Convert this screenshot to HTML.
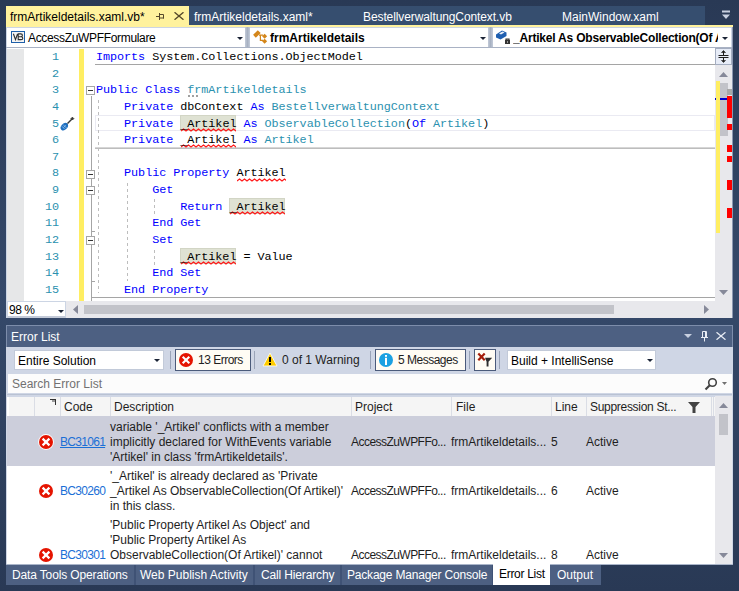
<!DOCTYPE html>
<html><head><meta charset="utf-8">
<style>
*{margin:0;padding:0;box-sizing:border-box}
html,body{width:739px;height:591px;overflow:hidden;background:linear-gradient(to bottom,#293955 0%,#35496a 50%,#293955 100%);font-family:"Liberation Sans",sans-serif;font-size:12px}
.a{position:absolute}
.t{position:absolute;white-space:pre;line-height:14px}
.code{position:absolute;left:96px;white-space:pre;font-family:"Liberation Mono",monospace;font-size:11.8px;letter-spacing:-0.06px;line-height:16.64px;height:16.64px;color:#000;margin-top:1px}
.k{color:#0000ff}
.ty{color:#2b91af}
.ln{position:absolute;left:23px;width:36px;text-align:right;font-family:"Liberation Mono",monospace;font-size:11.8px;letter-spacing:-0.06px;line-height:16.64px;color:#2b91af;margin-top:1px}
.hl{background:#dfe2d3;outline:1px solid #d2d5c5;outline-offset:-1px}
.us{position:relative;top:2px}
.dg{position:absolute;width:1px;background:repeating-linear-gradient(to bottom,#bdbdbd 0 3px,transparent 3px 6px)}
.sep{position:absolute;height:1px;background:#a5a5a5}
.box{position:absolute;left:86px;width:9px;height:9px;border:1px solid #a5a5a5;background:#fff}
.box:after{content:"";position:absolute;left:1px;top:3px;width:5px;height:1px;background:#333}
.tick{position:absolute;left:91px;width:4px;height:1px;background:#a5a5a5}
.sb{position:absolute;background:#e8e8ec}
.tab2{position:absolute;top:565px;height:20px;background:#4d6082;color:#fff}
.tab2 span{position:absolute;top:3px;white-space:pre}
.hdr span{position:absolute;top:4px;white-space:pre;color:#1e1e1e}
.cd{position:absolute;width:1px;background:#dadde5;top:397px;height:19px}
.row{position:absolute;left:7px;width:708px}
.desc{position:absolute;left:110px;white-space:pre;line-height:15px;color:#1e1e1e}
.ic{position:absolute;width:15px;height:15px}
.code2{position:absolute;left:60px;color:#1a6fd6}
</style></head><body>

<!-- document tabs -->
<div class="a" style="left:6px;top:6px;width:183px;height:19px;background:#fff29d"></div>
<div class="t" style="left:10px;top:10px;color:#000">frmArtikeldetails.xaml.vb*</div>
<svg class="a" style="left:155px;top:12px" width="10" height="9" viewBox="0 0 10 9"><path d="M1 4.5H4M4.5 1V8M4 2.5H8.5V6.5M4 6H9" fill="none" stroke="#55482a" stroke-width="1"/></svg>
<svg class="a" style="left:174px;top:12px" width="10" height="8" viewBox="0 0 10 8"><path d="M0.5 0.3L9.5 7.7M9.5 0.3L0.5 7.7" fill="none" stroke="#55482a" stroke-width="1.4"/></svg>
<div class="a" style="left:189px;top:6px;width:516px;height:19px;background:#364e6f"></div>
<div class="t" style="left:194px;top:10px;color:#fff">frmArtikeldetails.xaml*</div>
<div class="t" style="left:363px;top:10px;color:#fff;letter-spacing:-0.1px">BestellverwaltungContext.vb</div>
<div class="t" style="left:562px;top:10px;color:#fff">MainWindow.xaml</div>
<svg class="a" style="left:721px;top:10px" width="10" height="10" viewBox="0 0 10 10"><path d="M1 1.5H9" stroke="#c8d0e0" stroke-width="2"/><path d="M1 4.5H9L5 9Z" fill="#c8d0e0"/></svg>
<div class="a" style="left:6px;top:25px;width:727px;height:2px;background:#fff29d"></div>

<!-- nav bar -->
<div class="a" style="left:6px;top:27px;width:727px;height:21px;background:#ccd5e4"></div>
<div class="a" style="left:7px;top:28px;width:238px;height:19px;background:#fff"></div>
<div class="a" style="left:250px;top:28px;width:238px;height:19px;background:#fff"></div>
<div class="a" style="left:493px;top:28px;width:238px;height:19px;background:#fff"></div>
<div class="a" style="left:245px;top:27px;width:5px;height:21px;background:linear-gradient(to right,#c3cbd9,#a7b1c2 50%,#c3cbd9)"></div>
<div class="a" style="left:488px;top:27px;width:5px;height:21px;background:linear-gradient(to right,#c3cbd9,#a7b1c2 50%,#c3cbd9)"></div>
<div class="a" style="left:6px;top:47px;width:727px;height:2px;background:#a9b2c4"></div>
<!-- VB icon -->
<div class="a" style="left:11px;top:31px;width:14px;height:12px;border:1px solid #1f5fa8;background:#f4f4f4"></div>
<svg class="a" style="left:11px;top:31px" width="14" height="12" viewBox="0 0 14 12"><path d="M2.4 2.8L4.5 8.7L6.6 2.8M7 2.9H9.8Q11.4 2.9 11.4 4.3Q11.4 5.7 9.8 5.7H7.4M7.4 5.7H10Q11.8 5.7 11.8 7.2Q11.8 8.6 10 8.6H7.2V2.9" fill="none" stroke="#2e2e2e" stroke-width="1.1"/></svg>
<div class="t" style="left:28px;top:31px;color:#000;letter-spacing:-0.33px">AccessZuWPFFormulare</div>
<svg class="a" style="left:237px;top:37px" width="6" height="3"><path d="M0 0H6L3 3Z" fill="#1b2436"/></svg>
<!-- class icon -->
<svg class="a" style="left:252px;top:29px" width="16" height="16" viewBox="0 0 16 16"><path d="M1.1 5.8L5.8 1.2L8.7 3.9L3.8 8.8Z" fill="#d4861a"/><path d="M7 6.2H11M8.4 6V11.4H11" fill="none" stroke="#d4861a" stroke-width="1.2"/><path d="M10.1 7.2L12.6 4.7L15.1 7.2L12.6 9.7Z" fill="#d4861a"/><path d="M10.1 12.2L12.6 9.7L15.1 12.2L12.6 14.7Z" fill="#d4861a"/></svg>
<div class="t" style="left:270px;top:31px;color:#000;font-weight:bold">frmArtikeldetails</div>
<svg class="a" style="left:480px;top:37px" width="6" height="3"><path d="M0 0H6L3 3Z" fill="#1b2436"/></svg>
<!-- field icon -->
<svg class="a" style="left:495px;top:29px" width="16" height="16" viewBox="0 0 16 16"><path d="M1 5.5L7 1.5L11.5 3.5V7L5.5 10.5L1 8.5Z" fill="#1f5fb0"/><path d="M4 4.5L7.5 2.5L9.5 3.5L6 5.5Z" fill="#e8eef8"/><rect x="10" y="11" width="5" height="4" fill="#333"/><rect x="12" y="12.5" width="1" height="1" fill="#fff"/><path d="M11 11.2V10.2H14V11.2" fill="none" stroke="#333" stroke-width="1.2"/></svg>
<div class="t" style="left:513px;top:31px;width:205px;overflow:hidden;color:#000;font-weight:bold;letter-spacing:-0.2px">_Artikel As ObservableCollection(Of A</div>
<svg class="a" style="left:722px;top:37px" width="6" height="3"><path d="M0 0H6L3 3Z" fill="#1b2436"/></svg>

<!-- editor -->
<div class="a" style="left:6px;top:48px;width:709px;height:253px;background:#fff;overflow:hidden" id="ed">
</div>
<div class="a" style="left:6px;top:48px;width:1px;height:270px;background:#ccd5e4"></div>
<div class="a" style="left:7px;top:49px;width:17px;height:252px;background:#e6e7e8"></div>
<div class="a" style="left:79px;top:49px;width:5px;height:252px;background:#ffee62"></div>

<div class="ln" style="top:48px">1</div>
<div class="ln" style="top:64.64px">2</div>
<div class="ln" style="top:81.28px">3</div>
<div class="ln" style="top:97.92px">4</div>
<div class="ln" style="top:114.56px">5</div>
<div class="ln" style="top:131.2px">6</div>
<div class="ln" style="top:147.84px">7</div>
<div class="ln" style="top:164.48px">8</div>
<div class="ln" style="top:181.12px">9</div>
<div class="ln" style="top:197.76px">10</div>
<div class="ln" style="top:214.4px">11</div>
<div class="ln" style="top:231.04px">12</div>
<div class="ln" style="top:247.68px">13</div>
<div class="ln" style="top:264.32px">14</div>
<div class="ln" style="top:280.96px">15</div>

<!-- screwdriver -->
<svg class="a" style="left:60px;top:116px" width="15" height="15" viewBox="0 0 15 15"><path d="M7.5 7.5L12 3" stroke="#3a3a3a" stroke-width="1.4"/><path d="M11 2.6L12.4 1.2L13.8 2.6L12.4 4Z" fill="#3a3a3a" stroke="#3a3a3a" stroke-width="1"/><path d="M6 7.8L7.2 9" stroke="#3a3a3a" stroke-width="2.2"/><ellipse cx="4.3" cy="10.7" rx="4.2" ry="3" transform="rotate(-45 4.3 10.7)" fill="#1e6fc0"/><path d="M3 8.5L6.5 12M1.8 10.2L4.8 13.2M3.5 11.5L5.8 9.2" stroke="#a8cdf0" stroke-width="0.7"/></svg>

<!-- current line box -->
<div class="a" style="left:95px;top:115px;width:620px;height:16px;border:1px solid #eaeaf2"></div>

<!-- separators -->
<div class="sep" style="left:95px;top:64px;width:620px"></div>
<div class="sep" style="left:95px;top:147px;width:620px;height:2px;background:linear-gradient(#d6d6d6 50%,#bdbdbd 50%)"></div>
<div class="sep" style="left:95px;top:297px;width:620px"></div>

<!-- outlining -->
<div class="a" style="left:91px;top:96px;width:1px;height:205px;background:#a5a5a5"></div>
<div class="box" style="top:86px"></div>
<div class="box" style="top:170px"></div>
<div class="box" style="top:186px"></div>
<div class="box" style="top:236px"></div>
<div class="tick" style="top:231px"></div>
<div class="tick" style="top:281px"></div>
<div class="tick" style="top:297px"></div>

<!-- structure guides -->
<div class="dg" style="left:98px;top:100px;height:193px"></div>
<div class="dg" style="left:127px;top:183px;height:98px"></div>
<div class="dg" style="left:154px;top:199px;height:16px"></div>
<div class="dg" style="left:154px;top:250px;height:15px"></div>

<!-- highlights -->
<div class="a hl" style="left:180px;top:115px;width:56px;height:16px"></div>
<div class="a hl" style="left:229px;top:198px;width:56px;height:16px"></div>
<div class="a hl" style="left:180px;top:248px;width:56px;height:16px"></div>

<!-- squiggles -->
<svg class="a" style="left:181px;top:128px" width="55" height="4" viewBox="0 0 55 4"><path d="M0 3 L2.5 1 L5 3 L7.5 1 L10 3 L12.5 1 L15 3 L17.5 1 L20 3 L22.5 1 L25 3 L27.5 1 L30 3 L32.5 1 L35 3 L37.5 1 L40 3 L42.5 1 L45 3 L47.5 1 L50 3 L52.5 1 L55 3 L57.5 1" fill="none" stroke="#ff1a1a" stroke-width="1.2"/></svg>
<svg class="a" style="left:181px;top:144px" width="55" height="4" viewBox="0 0 55 4"><path d="M0 3 L2.5 1 L5 3 L7.5 1 L10 3 L12.5 1 L15 3 L17.5 1 L20 3 L22.5 1 L25 3 L27.5 1 L30 3 L32.5 1 L35 3 L37.5 1 L40 3 L42.5 1 L45 3 L47.5 1 L50 3 L52.5 1 L55 3 L57.5 1" fill="none" stroke="#ff1a1a" stroke-width="1.2"/></svg>
<svg class="a" style="left:237px;top:178px" width="49" height="4" viewBox="0 0 49 4"><path d="M0 3 L2.5 1 L5 3 L7.5 1 L10 3 L12.5 1 L15 3 L17.5 1 L20 3 L22.5 1 L25 3 L27.5 1 L30 3 L32.5 1 L35 3 L37.5 1 L40 3 L42.5 1 L45 3 L47.5 1 L50 3" fill="none" stroke="#ff1a1a" stroke-width="1.2"/></svg>
<svg class="a" style="left:230px;top:211px" width="55" height="4" viewBox="0 0 55 4"><path d="M0 3 L2.5 1 L5 3 L7.5 1 L10 3 L12.5 1 L15 3 L17.5 1 L20 3 L22.5 1 L25 3 L27.5 1 L30 3 L32.5 1 L35 3 L37.5 1 L40 3 L42.5 1 L45 3 L47.5 1 L50 3 L52.5 1 L55 3 L57.5 1" fill="none" stroke="#ff1a1a" stroke-width="1.2"/></svg>
<svg class="a" style="left:181px;top:261px" width="55" height="4" viewBox="0 0 55 4"><path d="M0 3 L2.5 1 L5 3 L7.5 1 L10 3 L12.5 1 L15 3 L17.5 1 L20 3 L22.5 1 L25 3 L27.5 1 L30 3 L32.5 1 L35 3 L37.5 1 L40 3 L42.5 1 L45 3 L47.5 1 L50 3 L52.5 1 L55 3 L57.5 1" fill="none" stroke="#ff1a1a" stroke-width="1.2"/></svg>
<!-- code -->
<div class="code" style="top:48px"><span class="k">Imports</span> System.Collections.ObjectModel</div>
<div class="code" style="top:81.28px"><span class="k">Public</span> <span class="k">Class</span> <span class="ty">frmArtikeldetails</span></div>
<div class="code" style="top:97.92px">    <span class="k">Private</span> dbContext <span class="k">As</span> <span class="ty">BestellverwaltungContext</span></div>
<div class="code" style="top:114.56px">    <span class="k">Private</span> <span class="us">_</span>Artikel <span class="k">As</span> <span class="ty">ObservableCollection</span>(<span class="k">Of</span> <span class="ty">Artikel</span>)</div>
<div class="code" style="top:131.2px">    <span class="k">Private</span> <span class="us">_</span>Artikel <span class="k">As</span> <span class="ty">Artikel</span></div>
<div class="code" style="top:164.48px">    <span class="k">Public</span> <span class="k">Property</span> Artikel</div>
<div class="code" style="top:181.12px">        <span class="k">Get</span></div>
<div class="code" style="top:197.76px">            <span class="k">Return</span> <span class="us">_</span>Artikel</div>
<div class="code" style="top:214.4px">        <span class="k">End</span> <span class="k">Get</span></div>
<div class="code" style="top:231.04px">        <span class="k">Set</span></div>
<div class="code" style="top:247.68px">            <span class="us">_</span>Artikel = Value</div>
<div class="code" style="top:264.32px">        <span class="k">End</span> <span class="k">Set</span></div>
<div class="code" style="top:280.96px">    <span class="k">End</span> <span class="k">Property</span></div>

<!-- dots -->
<div class="a" style="left:188px;top:95px;width:2px;height:2px;background:#a0a0a0"></div>
<div class="a" style="left:192px;top:95px;width:2px;height:2px;background:#a0a0a0"></div>
<div class="a" style="left:196px;top:95px;width:2px;height:2px;background:#a0a0a0"></div>

<!-- vertical scrollbar -->
<div class="sb" style="left:715px;top:48px;width:17px;height:270px"></div>
<div class="a" style="left:715px;top:48px;width:17px;height:17px;background:#e7ecf7;border:1px solid #a4adc0"></div>
<svg class="a" style="left:716px;top:49px" width="15" height="15" viewBox="0 0 15 15"><path d="M2.5 6.5H12.5M2.5 8.5H12.5" stroke="#1e1e1e" stroke-width="1"/><path d="M7.5 2V6M7.5 9V13" stroke="#1e1e1e" stroke-width="1"/><path d="M5.5 3.5L7.5 1.5L9.5 3.5ZM5.5 11.5L7.5 13.5L9.5 11.5Z" fill="#1e1e1e" stroke="#1e1e1e" stroke-width="0.6"/></svg>
<svg class="a" style="left:719px;top:72px" width="9" height="5"><path d="M0 5H9L4.5 0Z" fill="#868999"/></svg>
<div class="a" style="left:720px;top:83px;width:8px;height:53px;background:#c2c3c9"></div>
<div class="a" style="left:715px;top:98px;width:17px;height:2px;background:#0000cc"></div>
<div class="a" style="left:716px;top:81px;width:4px;height:152px;background:#ffee62"></div>
<div class="a" style="left:727px;top:89px;width:5px;height:6px;background:#a8a8a8"></div>
<div class="a" style="left:727px;top:96px;width:5px;height:22px;background:#ff0000"></div>
<div class="a" style="left:727px;top:124px;width:5px;height:6px;background:#ff0000"></div>
<div class="a" style="left:727px;top:145px;width:5px;height:7px;background:#ff0000"></div>
<div class="a" style="left:727px;top:156px;width:5px;height:6px;background:#ff0000"></div>
<div class="a" style="left:727px;top:180px;width:5px;height:10px;background:#ff0000"></div>
<div class="a" style="left:727px;top:208px;width:5px;height:10px;background:#ff0000"></div>
<svg class="a" style="left:719px;top:290px" width="9" height="5"><path d="M0 0H9L4.5 5Z" fill="#868999"/></svg>

<div class="a" style="left:732px;top:27px;width:1px;height:291px;background:#8b97b0"></div>
<!-- horizontal scrollbar -->
<div class="sb" style="left:7px;top:301px;width:708px;height:17px"></div>
<div class="a" style="left:7px;top:301px;width:59px;height:17px;background:#fff;border:1px solid #ccd5e4;border-bottom:2px solid #c3cad8"></div>
<div class="t" style="left:9px;top:303px;color:#000;letter-spacing:-0.5px">98 %</div>
<svg class="a" style="left:58px;top:310px" width="6" height="3"><path d="M0 0H6L3 3Z" fill="#1b2436"/></svg>
<svg class="a" style="left:73px;top:305px" width="5" height="9"><path d="M5 0V9L0 4.5Z" fill="#868999"/></svg>
<div class="a" style="left:84px;top:305px;width:530px;height:9px;background:#c2c3c9"></div>
<svg class="a" style="left:704px;top:305px" width="5" height="9"><path d="M0 0V9L5 4.5Z" fill="#868999"/></svg>

<!-- error list panel -->
<div class="a" style="left:6px;top:325px;width:727px;height:240px;background:#cfd6e5"></div>
<div class="a" style="left:6px;top:325px;width:727px;height:22px;background:#4d6082;border:1px solid #7d8dab;border-bottom:none"></div>
<div class="t" style="left:11px;top:330px;color:#fff">Error List</div>
<svg class="a" style="left:684px;top:334px" width="8" height="4"><path d="M0 0H8L4 4Z" fill="#c8d0e0"/></svg>
<svg class="a" style="left:700px;top:331px" width="9" height="11" viewBox="0 0 9 11"><path d="M2.5 0.5H6.5V6.5H2.5ZM1 6.5H8M4.5 6.5V10.5M5.5 0.5V6.5" fill="none" stroke="#e8ecf4" stroke-width="1"/></svg>
<svg class="a" style="left:716px;top:332px" width="10" height="8" viewBox="0 0 10 8"><path d="M0.5 0.3L9.5 7.7M9.5 0.3L0.5 7.7" fill="none" stroke="#e8ecf4" stroke-width="1.3"/></svg>

<!-- toolbar -->
<div class="a" style="left:14px;top:350px;width:150px;height:20px;background:#fff;border:1px solid #c2cad9"></div>
<div class="t" style="left:18px;top:354px;color:#000">Entire Solution</div>
<svg class="a" style="left:154px;top:359px" width="6" height="3"><path d="M0 0H6L3 3Z" fill="#1b2436"/></svg>
<div class="a" style="left:170px;top:351px;width:1px;height:18px;background:#9aa4b8"></div>
<div class="a" style="left:175px;top:349px;width:76px;height:22px;background:#fffcf4;border:1px solid #4b5b7b"></div>
<svg class="a" style="left:179px;top:353px" width="15" height="15" viewBox="0 0 15 15"><circle cx="7" cy="7" r="7" fill="#e51400"/><path d="M3.7 3.7L10.3 10.3M10.3 3.7L3.7 10.3" stroke="#fff" stroke-width="2.1"/></svg>
<div class="t" style="left:198px;top:353px;color:#1e1e1e;letter-spacing:-0.5px">13 Errors</div>
<div class="a" style="left:254px;top:351px;width:1px;height:18px;background:#9aa4b8"></div>
<svg class="a" style="left:262px;top:352px" width="16" height="15" viewBox="0 0 16 15"><path d="M8 1L15 14H1Z" fill="#ffcc00" stroke="#fff" stroke-width="0.8" stroke-linejoin="round"/><path d="M8 5V10" stroke="#000" stroke-width="2"/><rect x="7" y="11" width="2" height="2" fill="#000"/></svg>
<div class="t" style="left:282px;top:353px;color:#1e1e1e">0 of 1 Warning</div>
<div class="a" style="left:370px;top:351px;width:1px;height:18px;background:#9aa4b8"></div>
<div class="a" style="left:375px;top:349px;width:91px;height:22px;background:#fffcf4;border:1px solid #4b5b7b"></div>
<svg class="a" style="left:379px;top:353px" width="15" height="15" viewBox="0 0 15 15"><circle cx="7" cy="7" r="7" fill="#1ba1e2"/><rect x="6" y="4.8" width="2" height="7.2" fill="#fff"/><rect x="6" y="2" width="2" height="1.8" fill="#fff"/></svg>
<div class="t" style="left:398px;top:353px;color:#1e1e1e;letter-spacing:-0.5px">5 Messages</div>
<div class="a" style="left:469px;top:351px;width:1px;height:18px;background:#9aa4b8"></div>
<div class="a" style="left:474px;top:349px;width:22px;height:22px;background:#fffcf4;border:1px solid #4b5b7b"></div>
<svg class="a" style="left:477px;top:352px" width="16" height="16" viewBox="0 0 16 16"><path d="M1.3 1.6L7.7 8.2M7.7 1.6L1.3 8.2" stroke="#a51d0a" stroke-width="2.2"/><path d="M8 5.8H15.2L11.5 9.8V14.6H9.6V9.8Z" fill="#2d2d2d"/></svg>
<div class="a" style="left:499px;top:351px;width:1px;height:18px;background:#9aa4b8"></div>
<div class="a" style="left:507px;top:350px;width:149px;height:20px;background:#fff;border:1px solid #c2cad9"></div>
<div class="t" style="left:511px;top:354px;color:#000">Build + IntelliSense</div>
<svg class="a" style="left:647px;top:359px" width="6" height="3"><path d="M0 0H6L3 3Z" fill="#1b2436"/></svg>

<!-- search -->
<div class="a" style="left:8px;top:374px;width:724px;height:19px;background:#fcfcfc"></div>
<div class="t" style="left:12px;top:377px;color:#717171">Search Error List</div>
<svg class="a" style="left:704px;top:377px" width="14" height="14" viewBox="0 0 14 14"><circle cx="8.5" cy="5.5" r="3.8" fill="none" stroke="#424242" stroke-width="1.6"/><path d="M6 8L1.5 12.5" stroke="#424242" stroke-width="2.2"/></svg>
<svg class="a" style="left:722px;top:382px" width="5" height="3"><path d="M0 0H5L2.5 3Z" fill="#717171"/></svg>

<!-- list -->
<div class="a" style="left:7px;top:394px;width:725px;height:1px;background:#b9c2d3"></div>
<div class="a" style="left:7px;top:397px;width:708px;height:19px;background:#f5f5f5"></div>
<div class="a" style="left:7px;top:397px;width:2px;height:19px;background:#fff"></div>
<div class="cd" style="left:34px"></div>
<div class="cd" style="left:60px"></div>
<div class="cd" style="left:110px"></div>
<div class="cd" style="left:351px"></div>
<div class="cd" style="left:451px"></div>
<div class="cd" style="left:551px"></div>
<div class="cd" style="left:586px"></div>
<div class="cd" style="left:711px"></div><div class="cd" style="left:713px"></div>
<div class="hdr">
<div class="a" style="left:50px;top:399px;width:6px;height:1px;background:#333"></div><div class="a" style="left:52px;top:400px;width:3px;height:2px;background:#999"></div><div class="a" style="left:55px;top:400px;width:1px;height:5px;background:#333"></div>
<span style="left:64px;top:400px">Code</span>
<span style="left:114px;top:400px">Description</span>
<span style="left:355px;top:400px">Project</span>
<span style="left:456px;top:400px">File</span>
<span style="left:555px;top:400px">Line</span>
<span style="left:590px;top:400px;letter-spacing:-0.3px">Suppression St...</span>
</div>
<svg class="a" style="left:688px;top:402px" width="12" height="11" viewBox="0 0 12 11"><path d="M0 0H12L7.5 5V11H4.5V5Z" fill="#424242"/></svg>
<div class="a" style="left:7px;top:416px;width:708px;height:148px;background:#fff"></div>
<div class="a" style="left:7px;top:416px;width:708px;height:50px;background:#cccedb"></div>

<!-- rows -->
<svg class="a" style="left:38px;top:434px" width="16" height="16" viewBox="0 0 16 16"><circle cx="8" cy="8" r="7.9" fill="#fff"/><circle cx="8" cy="8" r="7" fill="#e51400"/><path d="M4.6 4.6L11.4 11.4M11.4 4.6L4.6 11.4" stroke="#fff" stroke-width="2.2"/></svg>
<div class="t" style="left:60px;top:435px;color:#1a6fd6;text-decoration:underline;letter-spacing:-0.7px">BC31061</div>
<div class="desc" style="top:420px">variable '_Artikel' conflicts with a member
implicitly declared for WithEvents variable
'Artikel' in class 'frmArtikeldetails'.</div>
<div class="t" style="left:351px;top:435px;color:#1e1e1e;letter-spacing:-0.54px">AccessZuWPFFo...</div>
<div class="t" style="left:451px;top:435px;color:#1e1e1e">frmArtikeldetails...</div>
<div class="t" style="left:551px;top:435px;color:#1e1e1e">5</div>
<div class="t" style="left:586px;top:435px;color:#1e1e1e">Active</div>

<svg class="a" style="left:38px;top:483px" width="16" height="16" viewBox="0 0 16 16"><circle cx="8" cy="8" r="7.9" fill="#fff"/><circle cx="8" cy="8" r="7" fill="#e51400"/><path d="M4.6 4.6L11.4 11.4M11.4 4.6L4.6 11.4" stroke="#fff" stroke-width="2.2"/></svg>
<div class="t" style="left:60px;top:484px;color:#1a6fd6;letter-spacing:-0.7px">BC30260</div>
<div class="desc" style="top:469px">'_Artikel' is already declared as 'Private
_Artikel As ObservableCollection(Of Artikel)'
in this class.</div>
<div class="t" style="left:351px;top:484px;color:#1e1e1e;letter-spacing:-0.54px">AccessZuWPFFo...</div>
<div class="t" style="left:451px;top:484px;color:#1e1e1e">frmArtikeldetails...</div>
<div class="t" style="left:551px;top:484px;color:#1e1e1e">6</div>
<div class="t" style="left:586px;top:484px;color:#1e1e1e">Active</div>

<svg class="a" style="left:38px;top:547px" width="16" height="16" viewBox="0 0 16 16"><circle cx="8" cy="8" r="7.9" fill="#fff"/><circle cx="8" cy="8" r="7" fill="#e51400"/><path d="M4.6 4.6L11.4 11.4M11.4 4.6L4.6 11.4" stroke="#fff" stroke-width="2.2"/></svg>
<div class="t" style="left:60px;top:548px;color:#1a6fd6;letter-spacing:-0.7px">BC30301</div>
<div class="desc" style="top:518px">'Public Property Artikel As Object' and
'Public Property Artikel As
ObservableCollection(Of Artikel)' cannot</div>
<div class="t" style="left:351px;top:548px;color:#1e1e1e;letter-spacing:-0.54px">AccessZuWPFFo...</div>
<div class="t" style="left:451px;top:548px;color:#1e1e1e">frmArtikeldetails...</div>
<div class="t" style="left:551px;top:548px;color:#1e1e1e">8</div>
<div class="t" style="left:586px;top:548px;color:#1e1e1e">Active</div>

<!-- list vscroll -->
<div class="sb" style="left:715px;top:396px;width:17px;height:168px"></div>
<svg class="a" style="left:719px;top:403px" width="9" height="5"><path d="M0 5H9L4.5 0Z" fill="#868999"/></svg>
<div class="a" style="left:719px;top:414px;width:9px;height:21px;background:#c2c3c9"></div>
<svg class="a" style="left:719px;top:553px" width="9" height="5"><path d="M0 0H9L4.5 5Z" fill="#868999"/></svg>

<!-- bottom tabs -->
<div class="a" style="left:6px;top:564px;width:727px;height:1px;background:#aab5c9"></div>
<div class="a" style="left:6px;top:565px;width:595px;height:20px;background:#3f5275"></div>
<div class="tab2" style="left:6px;width:128px"><span style="left:6px;letter-spacing:-0.14px">Data Tools Operations</span></div>
<div class="tab2" style="left:136px;width:117px"><span style="left:4px">Web Publish Activity</span></div>
<div class="tab2" style="left:255px;width:85px"><span style="left:6px;letter-spacing:-0.15px">Call Hierarchy</span></div>
<div class="tab2" style="left:342px;width:150px"><span style="left:5px;letter-spacing:-0.2px">Package Manager Console</span></div>
<div class="a" style="left:493px;top:563px;width:57px;height:22px;background:#fff"></div>
<div class="t" style="left:499px;top:567px;color:#000;letter-spacing:-0.3px">Error List</div>
<div class="tab2" style="left:550px;width:51px"><span style="left:7px">Output</span></div>

</body></html>
